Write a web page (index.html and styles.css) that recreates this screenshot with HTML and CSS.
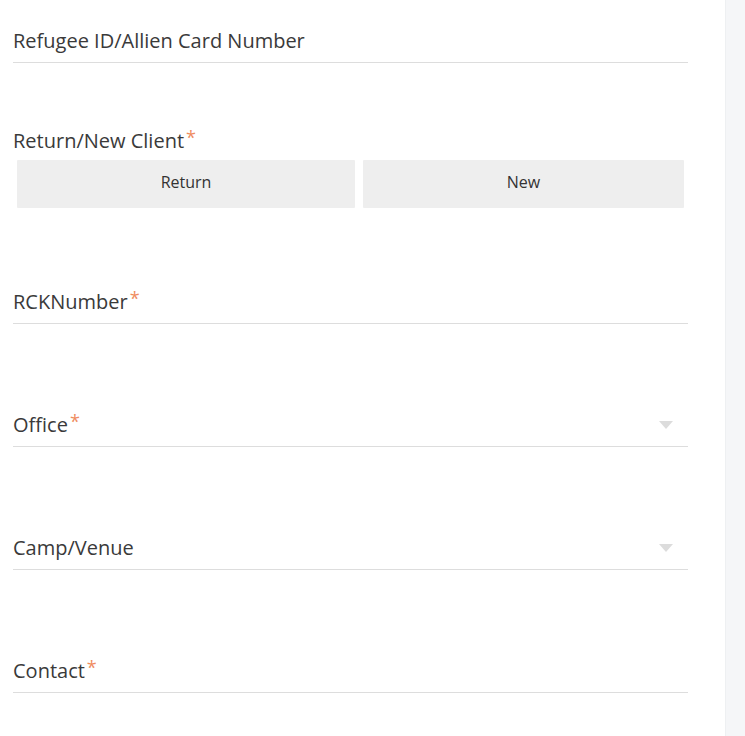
FILE: index.html
```html
<!DOCTYPE html>
<html>
<head>
<meta charset="utf-8">
<link rel="stylesheet" href="styles.css">
</head>
<body>
<div class="page">
  <main class="form">
    <div class="field first">
      <div class="label">Refugee ID/Allien Card Number</div>
    </div>
    <div class="group">
      <div class="label plain">Return/New Client<span class="req">*</span></div>
      <div class="buttons">
        <button class="btn">Return</button>
        <button class="btn">New</button>
      </div>
    </div>
    <div class="field after-buttons">
      <div class="label">RCKNumber<span class="req">*</span></div>
    </div>
    <div class="field select">
      <div class="label">Office<span class="req">*</span></div>
      <span class="caret"></span>
    </div>
    <div class="field select">
      <div class="label">Camp/Venue</div>
      <span class="caret"></span>
    </div>
    <div class="field">
      <div class="label">Contact<span class="req">*</span></div>
    </div>
  </main>
  <aside class="side"></aside>
</div>
</body>
</html>
```
FILE: styles.css
```css
html, body {
  margin: 0;
  padding: 0;
  background: #ffffff;
  font-family: "Open Sans", "Liberation Sans", sans-serif;
  color: #3a3a3a;
}
.page {
  display: flex;
  height: 736px;
  overflow: hidden;
}
.form {
  width: 675px;
  padding-left: 13px;
  padding-right: 37px;
}
.side {
  flex: 1;
  background: #f5f6f8;
  border-left: 1px solid #eef0f2;
}
.field {
  display: flex;
  align-items: center;
  justify-content: space-between;
  border-bottom: 1px solid #dddddd;
  padding-bottom: 8px;
  margin-top: 87px;
}
.field.first {
  margin-top: 27px;
}
.field.after-buttons {
  margin-top: 80px;
}
.label {
  font-size: 20px;
  line-height: 27px;
  height: 27px;
  color: #3a3a3a;
}
.req {
  color: #ef8c60;
  font-size: 18px;
  line-height: 0;
  position: relative;
  top: -4px;
  margin-left: 2px;
}
.group {
  margin-top: 64px;
}
.buttons {
  display: grid;
  grid-template-columns: 338px 321px;
  gap: 8px;
  padding: 0 4px;
  margin-top: 6px;
}
.btn {
  height: 48px;
  border: none;
  background: #eeeeee;
  font-family: "Open Sans", "Liberation Sans", sans-serif;
  font-size: 16px;
  color: #333333;
  border-radius: 1px;
  padding: 0 0 4px 0;
}
.caret {
  width: 0;
  height: 0;
  border-left: 7px solid transparent;
  border-right: 7px solid transparent;
  border-top: 8px solid #dcdcdc;
  margin-right: 15px;
}
```
